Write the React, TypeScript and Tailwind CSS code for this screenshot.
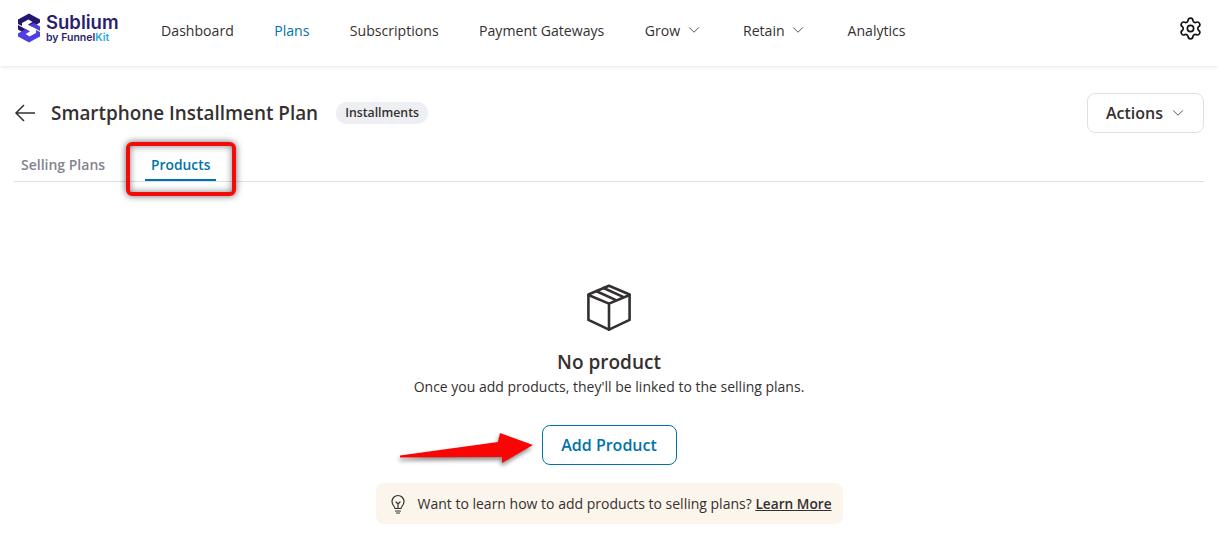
import { ChevronDown, Settings } from 'lucide-react'

const font = { fontFamily: '"Open Sans", "Noto Sans", sans-serif' }

function Logo() {
  return (
    <svg width="24" height="30" viewBox="0 0 24 30" fill="none">
      <path d="M12 0.5 L23 6.5 L23 9.5 L15.5 14 L11 11.5 L15.5 9 L11.5 6.5 L5 10 L5 13 L1 11 L1 6.5 Z" fill="#26176e" />
      <path d="M1 12 L12 18 L7 20 L1 16.5 Z" fill="#26176e" />
      <path d="M12 29.5 L1 23.5 L1 20.5 L8.5 16 L13 18.5 L8.5 21 L12.5 23.5 L19 20 L19 17 L23 19 L23 23.5 Z" fill="#4f3fe0" />
      <path d="M23 18 L12 12 L17 10 L23 13.5 Z" fill="#4f3fe0" />
    </svg>
  )
}

function NavItem({ label, active, chevron }: { label: string; active?: boolean; chevron?: boolean }) {
  return (
    <a className={`flex items-center gap-[4.5px] text-[14.1px] ${active ? 'text-[#0073aa]' : 'text-[#353030]'}`}>
      {label}
      {chevron && <ChevronDown size={18} strokeWidth={1.1} />}
    </a>
  )
}

export default function App() {
  return (
    <div className="relative h-[559px] w-[1218px] overflow-hidden bg-white" style={font}>
      <header className="flex h-[66px] items-start justify-between pr-[15px] pl-[17px] shadow-[0_1px_4px_rgba(0,0,0,0.1)]">
        <div className="flex items-center pt-[12px]">
          <div className="flex items-center gap-[5px]">
            <Logo />
            <div className="flex flex-col" style={{ fontFamily: 'Inter, sans-serif' }}>
              <span className="text-[18.5px] leading-[20px] font-semibold text-[#2a1f6b]">Sublium</span>
              <span className="text-[10.5px] leading-[11px] font-semibold text-[#2a1f6b]">
                by Funnel<span className="text-[#29a8e0]">Kit</span>
              </span>
            </div>
          </div>
          <nav className="mt-[6px] ml-[42.5px] flex items-center gap-[40.4px]">
            <NavItem label="Dashboard" />
            <NavItem label="Plans" active />
            <NavItem label="Subscriptions" />
            <NavItem label="Payment Gateways" />
            <NavItem label="Grow" chevron />
            <NavItem label="Retain" chevron />
            <NavItem label="Analytics" />
          </nav>
        </div>
        <Settings size={25} strokeWidth={1.6} className="mt-[16px] text-[#111]" />
      </header>

      <main className="px-[14px]">
        <div className="mt-[27px] flex items-center justify-between">
          <div className="flex items-center">
            <svg width="22" height="20" viewBox="0 0 22 20" fill="none" stroke="#353030" strokeWidth="1.5">
              <path d="M21 10H2M10 2L2 10l8 8" />
            </svg>
            <h1 className="ml-[15px] text-[18.9px] font-semibold text-[#353030]">Smartphone Installment Plan</h1>
            <span className="ml-[18px] rounded-full bg-[#edeff2] px-[9px] py-[2px] text-[12.3px] font-semibold text-[#353030]">
              Installments
            </span>
          </div>
          <button className="flex h-[40px] w-[117px] items-center gap-[5.5px] rounded-[8px] border border-[#dedfea] pl-[18px] text-[16px] font-semibold text-[#353030]">
            Actions
            <ChevronDown size={18} strokeWidth={1.1} />
          </button>
        </div>

        <div className="mt-[9px] flex h-[40px] border-b border-[#dedfea] pl-[7px]">
          <div className="flex items-center pt-[6px] text-[14px] font-semibold text-[#82838e]">Selling Plans</div>
          <div className="ml-[40px] flex items-center border-b-2 border-[#0073aa] px-[6px] pt-[10px] text-[13.8px] font-semibold text-[#0073aa]">
            Products
          </div>
        </div>

        <section className="mt-[100px] flex flex-col items-center text-[#353030]">
          <svg width="52" height="52" viewBox="0 0 48 48" fill="none" stroke="#353030" strokeWidth="2.4" strokeLinejoin="round" strokeLinecap="round">
            <path d="M24 3.5 L43 11.5 V35 L24 44 L5 35 V11.5 Z" />
            <path d="M5 12 L24 20 L43 12 M24 20 V44 M12.5 8.5 L31 17 M19 5.5 L37.5 14" />
          </svg>
          <h2 className="mt-[15px] text-[19px] leading-[26px] font-semibold">No product</h2>
          <p className="mt-[2px] text-[14px] leading-[20px]">Once you add products, they'll be linked to the selling plans.</p>
          <button className="mt-[28px] flex h-[40px] w-[135px] items-center justify-center rounded-[8px] border border-[#0073aa] text-[16px] font-semibold text-[#0073aa]">
            Add Product
          </button>
          <div className="mt-[18px] flex h-[41px] w-[467px] items-center gap-[11px] rounded-[8px] bg-[#fcf5eb] pl-[13px] text-[14px]">
            <svg width="18" height="20" viewBox="0 0 18 20" fill="none" stroke="#353030" strokeWidth="1.2" strokeLinecap="round">
              <path d="M6 14.5c0-2-3-3-3-7a6 6 0 0 1 12 0c0 4-3 5-3 7Z" />
              <path d="M6.5 17h5M7.5 19h3M7 8l2 2 2-2M9 10v4.5" />
            </svg>
            <span>
              Want to learn how to add products to selling plans?{' '}
              <a className="text-[13.7px] font-semibold underline">Learn More</a>
            </span>
          </div>
        </section>
      </main>

      {/* annotations drawn on top of the screenshot */}
      <div className="absolute top-[142px] left-[126px] h-[54px] w-[110px] rounded-[6px] border-[4px] border-[#f50a0a] shadow-[0_0_7px_rgba(0,0,0,0.6),inset_0_0_7px_rgba(0,0,0,0.5)]" />
      <svg className="absolute top-[430px] left-[398px]" width="140" height="36" viewBox="0 0 140 36" style={{ filter: 'drop-shadow(-1px 3px 2px rgba(0,0,0,0.45))' }}>
        <path d="M2 25.5 L100 12 L102 3 L135 15 L104 33 L104 27 L2 27.5 Z" fill="#fa0505" />
      </svg>
    </div>
  )
}
